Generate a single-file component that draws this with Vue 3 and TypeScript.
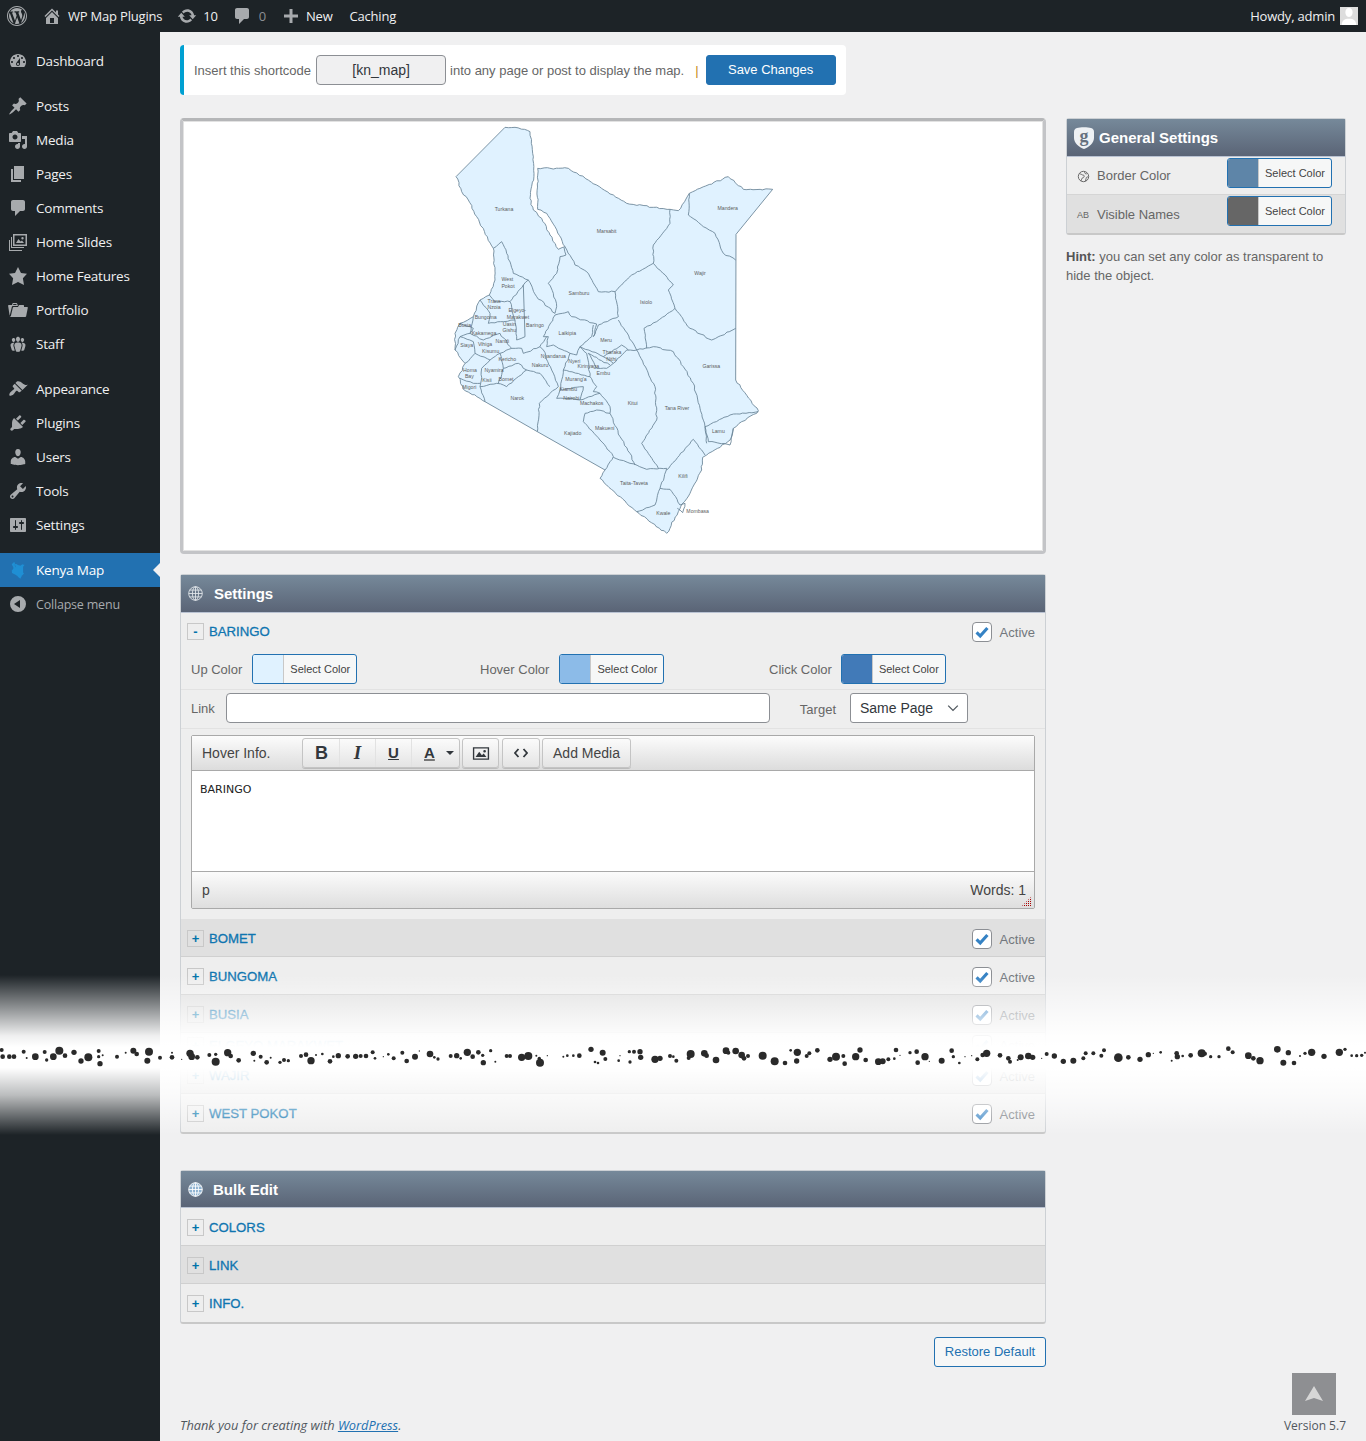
<script setup lang="ts">
import { computed } from "vue";

const wpLogo = "M20 10c0-5.52-4.48-10-10-10S0 4.48 0 10s4.48 10 10 10 10-4.48 10-10zM10 1.01c4.96 0 8.99 4.03 8.99 8.99s-4.03 8.99-8.99 8.99S1.01 14.96 1.01 10 5.04 1.01 10 1.01zM8.01 14.82L4.96 6.61c.49-.03 1.05-.08 1.05-.08.43-.05.38-1.01-.06-.99 0 0-1.29.1-2.13.1-.15 0-.33 0-.52-.01 1.44-2.17 3.9-3.6 6.7-3.6 2.09 0 3.99.79 5.41 2.09-.6-.08-1.45.35-1.45 1.42 0 .66.38 1.22.79 1.88.31.54.5 1.22.5 2.21 0 1.34-1.27 4.48-1.27 4.48l-2.71-7.5c.48-.03.75-.16.75-.16.43-.05.38-1.1-.05-1.08 0 0-1.3.11-2.14.11-.78 0-2.11-.11-2.11-.11-.43-.02-.48 1.06-.05 1.08l.84.08 1.12 3.04zm6.02 2.15L16.64 10s.67-1.69.39-3.81c.63 1.14.94 2.42.94 3.81 0 2.96-1.56 5.58-3.94 6.97zM2.68 6.77L6.5 17.25c-2.67-1.3-4.47-4.08-4.47-7.25 0-1.16.2-2.23.65-3.23zm7.45 4.53l2.29 6.25c-.75.27-1.57.42-2.42.42-.72 0-1.41-.11-2.06-.3z";
const homeIcon = "M16 8.5l1.53 1.53-1.06 1.06L10 4.62l-6.47 6.47-1.06-1.06L10 2.5l4 4v-2h2v4zm-6-2.46l6 5.99V18H4v-5.97zM12 17v-5H8v5h4z";
const updateIcon = "M10.2 3.28c3.53 0 6.43 2.61 6.92 6h2.08l-3.5 4-3.5-4h2.32c-.45-1.97-2.21-3.45-4.32-3.45-1.45 0-2.73.71-3.54 1.78L4.95 5.66C6.23 4.2 8.11 3.28 10.2 3.28zm-.4 13.44c-3.52 0-6.43-2.61-6.92-6H.8l3.5-4c1.17 1.33 2.33 2.67 3.5 4H5.48c.45 1.97 2.21 3.45 4.32 3.45 1.45 0 2.73-.71 3.54-1.78l1.71 1.95c-1.28 1.46-3.15 2.38-5.25 2.38z";
const commentIcon = "M5 2h10c1.1 0 2 .9 2 2v7c0 1.1-.9 2-2 2h-3l-5 5v-5H5c-1.1 0-2-.9-2-2V4c0-1.1.9-2 2-2z";
const plusIcon = "M17 8.5v3h-5.5V17h-3v-5.5H3v-3h5.5V3h3v5.5z";

const menu = [
    { label: "Dashboard", icon: "M3.76 16h12.48c1.1-1.37 1.76-3.11 1.76-5 0-4.42-3.58-8-8-8s-8 3.58-8 8c0 1.89.66 3.63 1.76 5zM10 4c.55 0 1 .45 1 1s-.45 1-1 1-1-.45-1-1 .45-1 1-1zM6 6c.55 0 1 .45 1 1s-.45 1-1 1-1-.45-1-1 .45-1 1-1zm8 0c.55 0 1 .45 1 1s-.45 1-1 1-1-.45-1-1 .45-1 1-1zm-5.37 5.55L12 7v6c0 1.1-.9 2-2 2s-2-.9-2-2c0-.57.24-1.08.63-1.45zM4 10c.55 0 1 .45 1 1s-.45 1-1 1-1-.45-1-1 .45-1 1-1zm12 0c.55 0 1 .45 1 1s-.45 1-1 1-1-.45-1-1 .45-1 1-1zm-5 3c0-.55-.45-1-1-1s-1 .45-1 1 .45 1 1 1 1-.45 1-1z", gap: false },
    { label: "Posts", icon: "M10.44 3.02l1.82-1.82 6.36 6.35-1.83 1.82c-1.05-.68-2.48-.57-3.41.36l-.75.75c-.92.93-1.04 2.35-.35 3.41l-1.83 1.82-2.41-2.41-2.8 2.79c-.42.42-3.38 2.71-3.8 2.29s1.86-3.39 2.28-3.81l2.79-2.79L4.1 9.36l1.83-1.82c1.05.69 2.48.57 3.4-.36l.75-.75c.93-.92 1.05-2.35.36-3.41z", gap: true },
    { label: "Media", icon: "M13 11V4c0-.55-.45-1-1-1h-1.67L9 1H5L3.67 3H2c-.55 0-1 .45-1 1v7c0 .55.45 1 1 1h10c.55 0 1-.45 1-1zM7 4.5c1.38 0 2.5 1.12 2.5 2.5S8.38 9.5 7 9.5 4.5 8.38 4.5 7 5.62 4.5 7 4.5zM14 6h5v10.5c0 1.38-1.12 2.5-2.5 2.5S14 17.88 14 16.5s1.12-2.5 2.5-2.5c.17 0 .34.02.5.05V9h-3V6zm-4 8.05V13h2v3.5c0 1.38-1.12 2.5-2.5 2.5S7 17.88 7 16.5 8.12 14 9.5 14c.17 0 .34.02.5.05z", gap: false },
    { label: "Pages", icon: "M6 15V2h10v13H6zm-1 1h8v2H3V5h2v11z", gap: false },
    { label: "Comments", icon: commentIcon, gap: false },
    { label: "Home Slides", icon: "M5 2h14v12H5V2zm1.5 1.5v9h11v-9h-11zM8 11l2.5-4 2 2.5 1.5-1 2 2.5H8zm6.5-6a1.2 1.2 0 1 1 0 2.4 1.2 1.2 0 0 1 0-2.4zM3 5h1v10h12v1H3V5zM1 8h1v10h12v1H1V8z", gap: false },
    { label: "Home Features", icon: "M10 1l3 6 6 .75-4.12 4.62L16 19l-6-3-6 3 1.13-6.63L1 7.75 7 7z", gap: false },
    { label: "Portfolio", icon: "M4 5H.78c-.37 0-.74.32-.69.84l1.56 9.99S3.5 8.47 3.86 6.7c.11-.53.61-.7.98-.7H10s-.7-2.08-.77-2.31C9.11 3.25 8.89 3 8.45 3H5.14c-.36 0-.7.23-.8.64C4.25 4.04 4 5 4 5zm4.88 0h-4s.42-1 .87-1h2.13c.48 0 1 1 1 1zM2.67 16.25c-.31.47-.76.75-1.26.75h15.73c.54 0 .92-.31 1.03-.83.44-2.19 1.68-8.44 1.68-8.44.07-.5-.3-.73-.62-.73H16V5.53c0-.16-.26-.53-.66-.53h-3.76c-.52 0-.87.58-.87.58L10 7H5.59c-.32 0-.63.19-.69.5 0 0-1.59 6.7-1.72 7.33-.07.37-.22.99-.51 1.42z", gap: false },
    { label: "Staff", icon: "M8.03 4.46c-.29 1.28.55 3.46 1.97 3.46 1.41 0 2.25-2.18 1.96-3.46-.22-.98-1.08-1.63-1.96-1.63-.89 0-1.74.65-1.97 1.63zm-4.13.9c-.25 1.08.47 2.93 1.67 2.93s1.92-1.85 1.67-2.93c-.19-.83-.92-1.39-1.67-1.39s-1.48.56-1.67 1.39zm8.86 0c-.25 1.08.47 2.93 1.66 2.93 1.2 0 1.92-1.85 1.67-2.93-.19-.83-.92-1.39-1.67-1.39-.74 0-1.47.56-1.66 1.39zm-.59 11.43l1.25-4.3C14.2 10 12.71 8.47 10 8.47c-2.72 0-4.21 1.53-3.44 4.02l1.26 4.3C8.05 17.51 9 18 10 18c.98 0 1.94-.49 2.17-1.21zm-6.1-7.63c-.49.67-.96 1.83-.42 3.59l1.12 3.79c-.34.2-.77.31-1.2.31-.85 0-1.65-.41-1.85-1.03l-1.07-3.65c-.65-2.11.61-3.4 2.92-3.4.27 0 .54.02.79.06-.1.1-.2.22-.29.33zm8.35-.39c2.31 0 3.58 1.29 2.92 3.4l-1.07 3.65c-.2.62-1 1.03-1.85 1.03-.43 0-.86-.11-1.2-.31l1.11-3.79c.55-1.76.08-2.92-.42-3.59-.09-.11-.19-.23-.29-.33.25-.04.51-.06.8-.06z", gap: false },
    { label: "Appearance", icon: "M14.48 11.06L7.41 3.99l1.5-1.5c.5-.56 2.3-.47 3.51.32 1.21.8 1.43 1.28 2.91 2.1 1.18.64 2.45 1.26 4.45.85zm-.71.71L6.7 4.7 4.93 6.47c-.39.39-.39 1.02 0 1.41l1.06 1.06c.39.39.39 1.03 0 1.42-.6.6-1.43 1.11-2.21 1.69-.35.26-.7.53-1.01.84C1.43 13.71.96 15.87 1.5 16.5c.53.53 2.79-.04 4.08-1.32.3-.3.58-.65.84-1 .58-.78 1.09-1.61 1.69-2.21.39-.39 1.02-.39 1.41 0l1.06 1.06c.39.39 1.02.39 1.41 0z", gap: true },
    { label: "Plugins", icon: "M13.11 4.36L9.87 7.6 8 5.73l3.24-3.24c.35-.34 1.05-.2 1.56.32.52.51.66 1.21.31 1.55zm-8 1.77l.91-1.12 9.01 9.01-1.19.84c-.71.71-2.63 1.16-3.82 1.16H6.14L4.9 17.26c-.59.59-1.54.59-2.12 0-.59-.58-.59-1.53 0-2.12l1.24-1.24v-3.88c0-1.13.4-3.19 1.09-3.89zm7.26 3.97l3.24-3.24c.34-.35 1.04-.21 1.55.31.52.51.66 1.21.31 1.55l-3.24 3.25z", gap: false },
    { label: "Users", icon: "M10 9.25c-2.27 0-2.73-3.44-2.73-3.44C7 4.02 7.82 2 9.97 2c2.16 0 2.98 2.02 2.71 3.81 0 0-.41 3.44-2.68 3.44zm0 2.57L12.72 10c2.39 0 4.52 2.33 4.52 4.53v2.49s-3.65 1.13-7.24 1.13c-3.65 0-7.24-1.13-7.24-1.13v-2.49c0-2.25 1.94-4.48 4.47-4.48z", gap: false },
    { label: "Tools", icon: "M16.68 9.77c-1.34 1.34-3.3 1.67-4.95.99l-5.41 6.52c-.99.99-2.59.99-3.58 0s-.99-2.59 0-3.57l6.52-5.42c-.68-1.65-.35-3.61.99-4.95 1.28-1.28 3.12-1.62 4.72-1.06l-2.89 2.89 2.82 2.82 2.86-2.87c.53 1.58.18 3.39-1.08 4.65zM3.81 16.21c.4.39 1.04.39 1.43 0 .4-.4.4-1.04 0-1.43-.39-.4-1.03-.4-1.43 0-.39.39-.39 1.03 0 1.43z", gap: false },
    { label: "Settings", icon: "M18 16V4c0-.55-.45-1-1-1H3c-.55 0-1 .45-1 1v12c0 .55.45 1 1 1h14c.55 0 1-.45 1-1zM8 11h1c.55 0 1 .45 1 1s-.45 1-1 1H8v1.5c0 .28-.22.5-.5.5s-.5-.22-.5-.5V13H6c-.55 0-1-.45-1-1s.45-1 1-1h1V5.5c0-.28.22-.5.5-.5s.5.22.5.5V11zm5-2h-1c-.55 0-1-.45-1-1s.45-1 1-1h1V5.5c0-.28.22-.5.5-.5s.5.22.5.5V7h1c.55 0 1 .45 1 1s-.45 1-1 1h-1v5.5c0 .28-.22.5-.5.5s-.5-.22-.5-.5V9z", gap: false },
];

const colorFields = [
    { label: "Up Color", swatch: "#e0f2ff", cls: "up" },
    { label: "Hover Color", swatch: "#8cbbe8", cls: "hover" },
    { label: "Click Color", swatch: "#417ab8", cls: "click" },
];

const collapsedRows = [
    { name: "BOMET", cls: "dark" },
    { name: "BUNGOMA", cls: "" },
    { name: "BUSIA", cls: "dark" },
    { name: "ELGEYO MARAKWET", cls: "cut" },
    { name: "WAJIR", cls: "dark" },
    { name: "WEST POKOT", cls: "" },
];

const bulkRows = [
    { name: "COLORS", cls: "" },
    { name: "LINK", cls: "dark" },
    { name: "INFO.", cls: "" },
];

// map is traced at 3x, same scale as the dots strip
const mapOutline = "M195 22L225 22L270 35L274 70L278 100L282 160L270 235L280 270L305 295L330 345L355 388L375 380L345 320L320 280L293 268L293 145L385 145L470 195L560 250L640 262L690 268L715 272L748 220L865 170L910 208L998 208L888 343L887 780L955 872L950 880L905 905L880 925L870 960L800 1005L788 1012L785 1050L750 1120L722 1160L680 1240L590 1175L500 1095L480 1075L495 1050L292 935L135 845L70 808L55 770L75 730L45 690L45 640L60 610L100 590L120 540L148 525L165 480L160 385L110 290L85 240L65 215L48 170Z";
const mapBorders = [
    "M160 385L185 365L200 400L220 460L265 480L290 530L345 580L350 560L340 520L325 490L350 460L360 410L378 405L372 382",
    "M375 380L405 435L440 455L475 515L525 515L575 465L640 430L640 375L690 310L690 268",
    "M748 220L745 285L790 320L825 340L850 400L887 420",
    "M640 430L700 495L685 510L705 565L750 625L815 660L887 625",
    "M525 515L535 590L475 615L460 650L470 612L395 590L385 575L345 585L310 650L325 650L320 680L340 675L390 700L410 705L420 680L455 650L460 615",
    "M705 565L650 605L612 625L620 685",
    "M535 600L590 690L645 800L650 900L605 970L655 1045",
    "M420 680L490 710L520 730L560 690L590 690L640 680L700 695L730 740L760 790L795 920L800 970",
    "M795 920L870 885L955 875",
    "M795 920L805 965L870 975L880 925",
    "M680 1050L760 958L795 1005",
    "M520 1012L570 1030L620 1048L680 1045L660 1105L645 1155L590 1175",
    "M660 1105L690 1108L720 1155L735 1150L728 1178L712 1165",
    "M495 1050L520 1010L480 960L430 905L435 880L470 870L510 880L540 950L570 1000L585 1035",
    "M292 935L298 850L330 820L355 800L335 750L310 690L300 680L320 650",
    "M120 800L135 845",
    "M120 800L170 790L200 800L235 770L260 750L300 760L330 800",
    "M350 835L360 810L430 800L420 840L385 835L350 835",
    "M420 840L480 820L510 860L510 880",
    "M360 810L370 750L390 700M370 750L450 770L470 800L460 815L480 820",
    "M420 680L440 700L450 770M445 700L470 745L500 745L520 730M445 700L510 735M490 710L545 675L565 690",
    "M148 525L165 545L210 545L250 495L265 480M250 495L255 650L230 660L225 600L210 545",
    "M120 540L150 580L145 610L190 605L225 600M100 590L90 640L130 660L180 640L215 685L245 685L250 700L300 680",
    "M60 610L100 625L90 640L60 650L45 690M60 650L100 665L105 700L75 730",
    "M105 700L150 720L180 700L215 685M180 700L190 745L175 790M190 745L235 730L260 750M150 720L125 745L122 790L120 800",
    "M60 775L100 790L122 790",
];
const mapLabels: [string, number, number][] = [
    ["Turkana", 192, 267], ["Marsabit", 500, 333], ["Mandera", 863, 264], ["Wajir", 780, 459],
    ["West", 202, 477], ["Pokot", 204, 498], ["Samburu", 417, 519], ["Isiolo", 618, 546],
    ["Trans", 162, 543], ["Nzoia", 162, 562], ["Elgeyo-", 232, 570], ["Marakwet", 234, 591],
    ["Bungoma", 137, 591], ["Busia", 74, 615], ["Uasin", 208, 612], ["Gishu", 208, 630],
    ["Baringo", 285, 615], ["Kakamega", 132, 641], ["Laikipia", 382, 639], ["Meru", 498, 660],
    ["Vihiga", 135, 673], ["Nandi", 187, 663], ["Siaya", 80, 675], ["Kisumu", 152, 695],
    ["Tharaka", 516, 698], ["Nithi", 514, 717], ["Nyandarua", 340, 708], ["Nyeri", 403, 723],
    ["Kericho", 202, 717], ["Nakuru", 300, 735], ["Kirinyaga", 445, 738], ["Embu", 490, 760],
    ["Homa", 90, 750], ["Bay", 88, 769], ["Nyamira", 162, 750], ["Garissa", 814, 738],
    ["Murang'a", 408, 777], ["Kisii", 141, 780], ["Bomet", 198, 777], ["Migori", 88, 801],
    ["Narok", 232, 834], ["Kiambu", 385, 809], ["Nairobi", 394, 834], ["Machakos", 455, 849],
    ["Kitui", 578, 851], ["Tana River", 711, 864], ["Lamu", 835, 933], ["Makueni", 494, 924],
    ["Kajiado", 398, 939], ["Kilifi", 729, 1068], ["Taita-Taveta", 582, 1089], ["Kwale", 670, 1179],
    ["Mombasa", 773, 1173],
];

// county lines are wobbly in the original, long straight borders stay straight
const wobble = (d: string) => {
    let seed = 7;
    const noise = () => {
        seed = (seed * 16807) % 2147483647;
        return (seed % 1000) / 500 - 1;
    };
    return d.split("M").filter(Boolean).map((part) => {
        const closed = part.endsWith("Z");
        const pts = part.replace("Z", "").split("L").map((p) => p.trim().split(" ").map(Number));
        if (closed) pts.push(pts[0]);
        let out = `M${pts[0][0]} ${pts[0][1]}`;
        for (let i = 1; i < pts.length; i++) {
            const [x0, y0] = pts[i - 1];
            const [x1, y1] = pts[i];
            const len = Math.hypot(x1 - x0, y1 - y0);
            if (len < 150) {
                const steps = Math.floor(len / 9);
                for (let s = 1; s < steps; s++) {
                    const t = s / steps;
                    out += `L${(x0 + (x1 - x0) * t + noise() * 2.2).toFixed(1)} ${(y0 + (y1 - y0) * t + noise() * 2.2).toFixed(1)}`;
                }
            }
            out += `L${x1} ${y1}`;
        }
        return out;
    }).join("");
};
const outlineWobbly = computed(() => wobble(mapOutline));
const bordersWobbly = computed(() => mapBorders.map(wobble));

// x, y, r at 3x, one list per stretch of the strip
const dotSegments: [number, number[][]][] = [
    [0, [[5,30,5],[8,50,6],[28,50,6],[42,50,6],[71,35,5],[80,54,2],[106,50,9],[134,36,5],[140,60,4],[160,50,9],[178,32,11],[195,47,6],[222,37,7],[243,63,7],[265,52,11],[296,33,5],[296,50,4],[308,46,2],[300,71,7],[351,50,5],[377,38,2],[400,32,8],[410,42,6],[447,35,11],[442,62,8],[480,53,5],[516,52,6],[516,38,2],[545,58,1],[570,40,10],[575,50,9],[592,52,6],[628,45,5],[647,43,4],[647,65,11],[683,38,10],[692,48,6],[716,61,6],[760,40,7],[782,50,5],[763,62,2],[800,67,6],[812,53,2],[840,67,4],[852,60,5],[865,62,4],[903,48,5],[918,44,6],[933,62,10],[948,45,2],[967,42,3],[990,64,6],[1000,50,3],[1015,47,7],[1043,49,6],[1067,49,7],[1082,48,5],[1098,48,6],[1118,37,5],[1125,55,3],[1150,50,1],[1165,43,3],[1181,55,5],[1207,38,5],[1220,63,6],[1245,50,8],[1258,33,1],[1290,42,9],[1303,52,3],[1314,57,4],[1352,48,5],[1370,47,7]]],
    [1380, [[2,55,3],[22,37,10],[38,50,6],[55,37,6],[68,46,4],[70,68,7],[92,32,4],[106,65,2],[140,48,5],[150,48,5],[185,52,10],[205,48,11],[229,47,2],[238,55,4],[240,68,11],[262,47,1],[310,50,2],[322,47,3],[340,47,3],[358,47,6],[393,28,7],[428,38,8],[436,57,5],[405,66,3],[414,69,3],[476,62,3],[480,47,1],[508,35,4],[522,35,5],[540,35,7],[542,52,7],[510,66,4],[585,58,10],[600,55,7],[630,48,5],[640,50,3],[649,62,5],[692,42,11],[686,54,5],[733,40,9],[740,47,6],[768,60,9],[798,32,9],[805,38,5],[827,33,9],[845,45,9],[852,55,6],[864,48,5],[908,47,11],[944,64,11],[975,69,6],[992,31,3],[1012,37,10],[1010,63,7],[1040,48,5],[1048,40,5],[1072,31,6],[1110,58,7],[1128,50,11],[1150,48,5],[1154,71,6],[1187,50,10],[1200,30,7],[1217,60,6],[1255,65,9],[1268,64,8],[1285,58,5],[1303,56,3],[1308,30,6],[1320,46,1],[1350,38,4],[1370,35,6],[1373,68,6]]],
    [2760, [[15,50,10],[28,64,1],[65,62,8],[95,32,6],[100,50,4],[118,69,3],[135,50,1],[155,47,1],[172,58,5],[188,45,6],[200,40,10],[240,46,6],[265,55,6],[270,65,5],[293,60,2],[302,52,8],[325,48,9],[338,52,7],[365,55,1],[380,42,5],[403,48,7],[430,64,7],[460,62,8],[490,55,5],[497,40,5],[520,40,5],[552,31,5],[544,47,5],[595,53,12],[625,52,6],[660,58,7],[685,44,7],[700,40,1],[722,37,3],[755,62,2],[770,40,6],[772,50,7],[788,48,3],[812,46,6],[845,40,11],[855,41,5],[872,50,4],[897,50,4],[925,26,6],[938,37,5],[985,47,9],[1000,55,6],[1020,62,10],[1072,28,9],[1105,38,7],[1090,68,8],[1122,69,6],[1140,48,2],[1155,40,4],[1175,37,10],[1212,49,7],[1258,37,10],[1275,28,4],[1295,47,3],[1310,47,4],[1325,46,4],[1335,38,2]]],
];
const dots = computed(() =>
    dotSegments.flatMap(([offset, list]) => list.map(([x, y, r]) => ({ x: x + offset, y, r: r + 1 })))
);
</script>

<template>
    <div class="page">
        <header class="adminbar">
            <svg class="wp" viewBox="0 0 20 20"><path :d="wpLogo" /></svg>
            <span class="ab-item site"><svg viewBox="0 0 20 20"><path :d="homeIcon" /></svg>WP Map Plugins</span>
            <span class="ab-item updates"><svg viewBox="0 0 20 20"><path :d="updateIcon" /></svg>10</span>
            <span class="ab-item comments"><svg viewBox="0 0 20 20"><path :d="commentIcon" /></svg><i>0</i></span>
            <span class="ab-item new"><svg viewBox="0 0 20 20"><path :d="plusIcon" /></svg>New</span>
            <span class="ab-item caching">Caching</span>
            <span class="howdy">Howdy, admin
                <span class="avatar"><svg viewBox="0 0 20 20"><path d="M10 11c-3 0-4-3-4-5.5S7.5 1 10 1s4 2 4 4.5S13 11 10 11zm-8 9c0-5 3-7 8-7s8 2 8 7H2z" /></svg></span>
            </span>
        </header>

        <div class="body">
            <nav class="sidebar">
                <a v-for="item in menu" :key="item.label" class="menu-item" :class="{ gap: item.gap }">
                    <svg viewBox="0 0 20 20"><path :d="item.icon" /></svg>{{ item.label }}
                </a>
                <a class="menu-item gap current">
                    <svg class="kenya" viewBox="0 0 1020 1260"><path :d="mapOutline" /></svg>Kenya Map
                </a>
                <a class="menu-item collapse">
                    <svg viewBox="0 0 20 20"><path fill-rule="evenodd" d="M10 2a8 8 0 1 1 0 16 8 8 0 0 1 0-16zm2 4l-6 4 6 4V6z" /></svg>Collapse menu
                </a>
            </nav>

            <main class="content">
                <div class="notice">
                    <span>Insert this shortcode</span>
                    <input class="shortcode" value="[kn_map]" readonly />
                    <span>into any page or post to display the map.</span>
                    <span class="pipe">|</span>
                    <button class="save">Save Changes</button>
                </div>

                <div class="columns">
                    <div class="left">
                        <div class="map-box">
                            <svg class="map" viewBox="0 6 1038 1260">
                                <path class="land" :d="outlineWobbly" />
                                <path v-for="(b, i) in bordersWobbly" :key="i" class="line" :d="b" />
                                <text v-for="l in mapLabels" :key="l[0]" :x="l[1]" :y="l[2] + 5" text-anchor="middle">{{ l[0] }}</text>
                            </svg>
                        </div>

                        <section class="panel settings">
                            <h2 class="panel-head">
                                <svg class="globe" viewBox="0 0 20 20"><circle cx="10" cy="10" r="8" /><ellipse cx="10" cy="10" rx="3.6" ry="8" /><path d="M2 10h16M3 6h14M3 14h14M10 2v16" /></svg>
                                Settings
                            </h2>
                            <div class="open-row">
                                <div class="row-title">
                                    <span class="toggle">-</span><span class="name">BARINGO</span>
                                    <label class="active"><span class="check"><svg viewBox="0 0 20 20"><path d="M4 10.5l4 4 8-9" /></svg></span>Active</label>
                                </div>
                                <div class="colors">
                                    <div v-for="f in colorFields" :key="f.label" class="color-field" :class="f.cls">
                                        <span>{{ f.label }}</span>
                                        <span class="picker"><i :style="{ background: f.swatch }"></i><b>Select Color</b></span>
                                    </div>
                                </div>
                                <div class="link-row">
                                    <span>Link</span>
                                    <input class="link" />
                                    <span class="target-label">Target</span>
                                    <span class="select">Same Page<svg viewBox="0 0 20 20"><path d="M4 7l6 6 6-6" /></svg></span>
                                </div>
                                <div class="editor">
                                    <div class="toolbar">
                                        <span class="hover-label">Hover Info.</span>
                                        <div class="tb-group">
                                            <span class="tb b">B</span>
                                            <span class="tb em">I</span>
                                            <span class="tb u">U</span>
                                            <span class="tb color"><u>A</u><svg viewBox="0 0 8 4"><path d="M0 0h8L4 4z" /></svg></span>
                                        </div>
                                        <span class="tb-btn img"><svg viewBox="0 0 20 16"><path fill-rule="evenodd" d="M1 1h18v14H1V1zm1.5 1.5v11h15v-11h-15zM4 12l4-6 3 4 2-2 3 4H4zm10-8a1.5 1.5 0 1 1 0 3 1.5 1.5 0 0 1 0-3z" /></svg></span>
                                        <span class="tb-btn code"><svg viewBox="0 0 14 10"><path d="M4.5 1L1 5l3.5 4M9.5 1L13 5 9.5 9" /></svg></span>
                                        <span class="tb-btn media">Add Media</span>
                                    </div>
                                    <div class="edit-area">BARINGO</div>
                                    <div class="status">
                                        <span>p</span><span class="words">Words: 1</span>
                                        <span class="grip"></span>
                                    </div>
                                </div>
                            </div>
                            <div v-for="r in collapsedRows" :key="r.name" class="row" :class="r.cls">
                                <span class="toggle">+</span><span class="name">{{ r.name }}</span>
                                <label class="active"><span class="check"><svg viewBox="0 0 20 20"><path d="M4 10.5l4 4 8-9" /></svg></span>Active</label>
                            </div>
                        </section>

                        <section class="panel bulk">
                            <h2 class="panel-head">
                                <svg class="globe solid" viewBox="0 0 20 20"><circle cx="10" cy="10" r="8" /><ellipse cx="10" cy="10" rx="3.6" ry="8" /><path d="M2 10h16M3 6h14M3 14h14M10 2v16" /></svg>
                                Bulk Edit
                            </h2>
                            <div v-for="r in bulkRows" :key="r.name" class="row" :class="r.cls">
                                <span class="toggle">+</span><span class="name">{{ r.name }}</span>
                            </div>
                        </section>

                        <div class="restore-line"><button class="restore">Restore Default</button></div>
                    </div>

                    <aside class="right">
                        <section class="panel general">
                            <h2 class="panel-head">
                                <span class="shield"><svg viewBox="0 0 20 22"><path d="M3 1C6 0 14 0 17 1c2 .6 3 2 3 4v6c0 5-5 9-10 11C5 20 0 16 0 11V5C0 3 1 1.6 3 1z" /></svg><b>g</b></span>
                                General Settings
                            </h2>
                            <div class="g-row">
                                <svg class="g-icon" viewBox="0 0 20 20"><circle cx="10" cy="10" r="8" /><path d="M4 6c3 0 4 2 6 2s1 4-1 4-2 4-3 5M12 3c-1 2 1 3 3 3M18 11c-2-1-4 0-4 2s-1 3-1 4" /></svg>
                                <span>Border Color</span>
                                <span class="picker"><i class="border-swatch"></i><b>Select Color</b></span>
                            </div>
                            <div class="g-row dark">
                                <small>AB</small>
                                <span>Visible Names</span>
                                <span class="picker"><i class="names-swatch"></i><b>Select Color</b></span>
                            </div>
                        </section>
                        <p class="hint"><b>Hint:</b> you can set any color as transparent to hide the object.</p>
                    </aside>
                </div>

                <footer class="foot">
                    <em>Thank you for creating with <a>WordPress</a>.</em>
                    <span class="version">Version 5.7</span>
                </footer>
            </main>
        </div>

        <a class="to-top"><svg viewBox="0 0 18 16"><path d="M9 0l9 15-9-3-9 3z" /></svg></a>

        <div class="tear">
            <svg viewBox="0 0 4098 90">
                <circle v-for="(d, i) in dots" :key="i" :cx="d.x" :cy="d.y" :r="d.r" />
            </svg>
        </div>
    </div>
</template>

<style>
html,
body {
    margin: 0;
    background: #f0f0f1;
}
</style>

<style scoped>
.page {
    position: relative;
    width: 1366px;
    height: 1441px;
    overflow: hidden;
    background: #f0f0f1;
    font-family: "Liberation Sans", Arial, sans-serif;
    font-size: 13px;
    color: #666;
}

/* admin bar */
.adminbar {
    display: flex;
    align-items: center;
    height: 32px;
    background: #1d2327;
    color: #f0f0f1;
    font-family: "Open Sans", sans-serif;
    font-size: 13px;
    letter-spacing: -0.2px;
}

.adminbar svg {
    width: 20px;
    height: 20px;
    fill: #a7aaad;
}

.adminbar .wp {
    margin: 0 15px 0 7px;
    width: 20px;
}

.ab-item {
    display: flex;
    align-items: center;
    gap: 6px;
}

.site {
    margin-right: 15px;
}

.updates {
    margin-right: 14px;
}

.comments {
    margin-right: 15px;
}

.comments i {
    color: #8c8f94;
    font-style: normal;
    margin-left: 1px;
}

.new {
    gap: 5px;
    margin-right: 17px;
}

.howdy {
    display: flex;
    align-items: center;
    gap: 5px;
    margin-left: auto;
    margin-right: 8px;
}

.avatar {
    display: block;
    width: 18px;
    height: 18px;
    background: #ddd;
    overflow: hidden;
}

.adminbar .avatar svg {
    display: block;
    width: 18px;
    height: 18px;
    fill: #fff;
}

/* sidebar */
.body {
    display: flex;
    height: 1409px;
}

.sidebar {
    flex: none;
    width: 160px;
    padding-top: 12px;
    box-sizing: border-box;
    background: #1d2327;
    font-family: "Open Sans", sans-serif;
    font-size: 13.5px;
    letter-spacing: -0.2px;
    color: #f0f0f1;
}

.menu-item {
    position: relative;
    display: flex;
    align-items: center;
    height: 34px;
    padding-left: 8px;
    box-sizing: border-box;
}

.menu-item svg {
    width: 20px;
    height: 20px;
    margin-right: 8px;
    fill: #a7aaad;
}

.menu-item.gap {
    margin-top: 11px;
}

.current {
    background: #2271b1;
    color: #fff;
}

.menu-item svg.kenya {
    width: 14px;
    height: 17px;
    margin: 0 11px 0 3px;
    fill: #1f8fd4;
}

.current::after {
    content: "";
    position: absolute;
    right: 0;
    top: 10px;
    border: 7px solid transparent;
    border-right-color: #f0f0f1;
    border-left: 0;
}

.collapse {
    color: #a7aaad;
    font-size: 12.5px;
}

/* content */
.content {
    flex: 1;
    padding: 13px 20px 0;
    min-width: 0;
}

.notice {
    display: flex;
    align-items: center;
    box-sizing: border-box;
    width: 666px;
    height: 50px;
    padding-left: 10px;
    background: #fff;
    border-left: 4px solid #00a0d2;
    border-radius: 4px;
}

.shortcode {
    box-sizing: border-box;
    width: 130px;
    height: 30px;
    margin: 0 4px 0 5px;
    background: #f0f0f1;
    border: 1px solid #8c8f94;
    border-radius: 4px;
    color: #32373c;
    font: 14px "Liberation Sans", sans-serif;
    text-align: center;
    outline: none;
}

.pipe {
    margin: 0 7px 0 11px;
    color: #c58b20;
}

.save {
    width: 130px;
    height: 30px;
    padding: 0 0 2px;
    background: #2271b1;
    border: 1px solid #2271b1;
    border-radius: 3px;
    color: #fff;
    font: 13px "Liberation Sans", sans-serif;
}

.columns {
    display: grid;
    grid-template-columns: 866px 280px;
    gap: 20px;
    margin-top: 23px;
}

.map-box {
    display: flex;
    justify-content: center;
    box-sizing: border-box;
    height: 436px;
    padding: 1px;
    background: #fff;
    border: 3px solid #c3c4c7;
    border-top-color: #b5b6b8;
    border-radius: 4px;
    box-shadow: inset 0 0 0 1px #e2e2e2;
}

.map {
    width: 346px;
    height: 420px;
}

.land {
    fill: #e0f2ff;
    stroke: #6a8497;
    stroke-width: 2.6;
}

.line {
    fill: none;
    stroke: #6a8497;
    stroke-width: 2.6;
}

.map text {
    fill: #5d5d5d;
    font-size: 15.5px;
    font-family: "Liberation Sans", sans-serif;
}

.panel {
    border: 1px solid #ccd0d4;
    border-bottom: 2px solid #c8c8c8;
    border-radius: 3px;
    background: #eee;
}

.panel-head {
    display: flex;
    align-items: center;
    box-sizing: border-box;
    height: 38px;
    margin: 0;
    padding-left: 6px;
    background: linear-gradient(#76899a, #5a6476);
    border-bottom: 1px solid #b9c2d2;
    color: #fff;
    font: bold 15px "Liberation Sans", sans-serif;
}

.settings {
    margin-top: 20px;
}

.bulk {
    margin-top: 36px;
}

.bulk .panel-head {
    height: 37px;
}

.globe {
    width: 17px;
    height: 17px;
    margin-right: 10px;
    fill: none;
    stroke: #e4e8ec;
    stroke-width: 1;
}

.globe.solid {
    margin-right: 9px;
    fill: #8fb3d1;
    stroke: #fff;
}

.row-title,
.row {
    display: flex;
    align-items: center;
    box-sizing: border-box;
    height: 38px;
    padding: 2px 10px 0 6px;
    border-bottom: 1px solid #d0d0d0;
}

.row-title {
    padding: 0 10px 1px 6px;
    border-bottom: 0;
}

.row.dark {
    background: #e0e0e0;
}

.row.cut {
    height: 23px;
    background: #eee;
}

.row:last-child {
    padding-top: 1px;
    border-bottom: 0;
}

.toggle {
    box-sizing: border-box;
    width: 17px;
    height: 17px;
    margin-right: 5px;
    border: 1px solid #c8c8c8;
    color: #0073aa;
    font: bold 13px/15px "Liberation Sans", sans-serif;
    text-align: center;
}

.name {
    color: #0f75b0;
    font-size: 13.2px;
    -webkit-text-stroke: 0.3px #0f75b0;
}

.active {
    display: flex;
    align-items: flex-start;
    gap: 8px;
    height: 20px;
    margin-left: auto;
    color: #72777c;
    line-height: 22px;
}

.check {
    box-sizing: border-box;
    display: block;
    width: 20px;
    height: 20px;
    background: #fff;
    border: 1px solid #8c8f94;
    border-radius: 4px;
}

.check svg {
    display: block;
    width: 18px;
    height: 18px;
    fill: none;
    stroke: #3582c4;
    stroke-width: 3.5;
}

.colors {
    display: flex;
    align-items: flex-start;
    box-sizing: border-box;
    height: 39px;
    padding: 3px 10px 0;
    border-bottom: 1px solid #e2e2e2;
}

.color-field {
    display: flex;
    align-items: center;
    gap: 10px;
}

.color-field.up,
.color-field.hover {
    width: 289px;
}

.color-field.click {
    gap: 9px;
}

.picker {
    display: flex;
    box-sizing: border-box;
    width: 105px;
    height: 30px;
    border: 1px solid #2271b1;
    border-radius: 3px;
    overflow: hidden;
    background: #f6f7f7;
}

.picker i {
    display: block;
    width: 30px;
    border-right: 1px solid #c8c8c8;
}

.picker b {
    flex: 1;
    color: #444;
    font-weight: 400;
    font-size: 11px;
    line-height: 28px;
    text-align: center;
}

.link-row {
    display: flex;
    align-items: flex-start;
    box-sizing: border-box;
    height: 39px;
    padding: 3px 10px 0;
    border-bottom: 1px solid #e2e2e2;
    line-height: 32px;
}

.link {
    box-sizing: border-box;
    width: 544px;
    height: 30px;
    margin-left: 11px;
    background: #fff;
    border: 1px solid #8c8f94;
    border-radius: 4px;
    outline: none;
}

.target-label {
    margin: 1px 14px 0 30px;
}

.select {
    display: flex;
    align-items: center;
    justify-content: space-between;
    box-sizing: border-box;
    width: 118px;
    height: 30px;
    padding: 0 6px 0 9px;
    background: #fff;
    border: 1px solid #8c8f94;
    border-radius: 3px;
    color: #32373c;
    font-size: 14px;
    line-height: 28px;
}

.select svg {
    width: 16px;
    height: 16px;
    fill: none;
    stroke: #50575e;
    stroke-width: 1.6;
}

.editor {
    margin: 6px 10px 10px;
    border: 1px solid #a9a9a9;
    border-radius: 2px;
    font-size: 14px;
}

.toolbar {
    display: flex;
    align-items: center;
    height: 34px;
    background: linear-gradient(#fcfcfc, #dcdcdc);
    border-bottom: 1px solid #a9a9a9;
    color: #444;
}

.hover-label {
    width: 110px;
    padding-left: 10px;
    box-sizing: border-box;
}

.tb-group,
.tb-btn {
    display: flex;
    align-items: center;
    box-sizing: border-box;
    height: 30px;
    background: linear-gradient(#fbfbfb, #e4e4e4);
    border: 1px solid #c4c4c4;
    border-radius: 3px;
    box-shadow: 0 1px 0 #bbb;
}

.tb-group {
    width: 158px;
    padding-left: 1px;
}

.tb {
    display: block;
    width: 36px;
    color: #32373c;
    line-height: 28px;
    text-align: center;
    border-right: 1px solid #e2e2e2;
    box-sizing: border-box;
    font-size: 18px;
}

.tb.b {
    font-weight: 700;
}

.tb.em {
    font-style: italic;
    font-weight: 700;
    font-family: "Liberation Serif", serif;
    font-size: 19px;
}

.tb.u {
    text-decoration: underline;
    font-size: 15px;
    font-weight: 700;
}

.tb.color {
    display: flex;
    align-items: center;
    gap: 11px;
    width: 46px;
    padding-left: 12px;
    border: 0;
    font-size: 15px;
    font-weight: 700;
}

.tb.color u {
    text-decoration-color: #777;
    text-decoration-thickness: 2px;
}

.tb.color svg {
    flex: none;
    width: 8px;
    height: 4px;
    fill: #32373c;
}

.tb-btn {
    justify-content: center;
    margin-left: 2px;
}

.img {
    width: 37px;
}

.img svg {
    width: 18px;
    height: 15px;
    fill: #32373c;
}

.code {
    width: 38px;
    margin-left: 3px;
}

.code svg {
    width: 14px;
    height: 10px;
    fill: none;
    stroke: #32373c;
    stroke-width: 1.8;
}

.media {
    width: 89px;
    color: #444;
}

.edit-area {
    box-sizing: border-box;
    height: 100px;
    padding: 12px 8px;
    background: #fff;
    color: #222;
    font: 11px "DejaVu Sans", sans-serif;
}

.status {
    position: relative;
    display: flex;
    justify-content: space-between;
    align-items: center;
    height: 36px;
    padding: 0 8px 0 10px;
    background: linear-gradient(#fbfbfb, #dedede);
    border-top: 1px solid #a9a9a9;
    color: #444;
}

.grip {
    position: absolute;
    right: 2px;
    bottom: 2px;
    width: 10px;
    height: 10px;
    clip-path: polygon(100% 0, 100% 100%, 0 100%);
    background:
        repeating-linear-gradient(#dedede 0 1px, transparent 1px 2px),
        repeating-linear-gradient(90deg, #a00 0 1px, transparent 1px 2px);
}

.restore-line {
    display: flex;
    justify-content: flex-end;
    margin-top: 13px;
}

.restore {
    width: 112px;
    height: 30px;
    padding: 0 0 1px;
    background: #f6f7f7;
    border: 1px solid #2271b1;
    border-radius: 3px;
    color: #2271b1;
    font: 13px "Liberation Sans", sans-serif;
}

/* right column */
.general .panel-head {
    padding-left: 7px;
}

.shield {
    position: relative;
    display: block;
    width: 20px;
    height: 22px;
    margin-right: 5px;
}

.shield svg {
    display: block;
    width: 20px;
    height: 22px;
    fill: #eef1f4;
}

.shield b {
    position: absolute;
    left: 0;
    right: 0;
    top: 0;
    color: #66717f;
    font-family: "Liberation Serif", serif;
    font-size: 18px;
    line-height: 19px;
    text-align: center;
}

.g-row {
    display: flex;
    align-items: center;
    box-sizing: border-box;
    height: 38px;
    padding: 0 13px 0 10px;
    border-bottom: 1px solid #d5d5d5;
}

.g-row.dark {
    background: #e0e0e0;
    border-bottom: 0;
}

.g-row .picker {
    align-self: flex-start;
    margin: 1px 0 0 auto;
}

.g-icon {
    width: 13px;
    height: 13px;
    margin: 2px 7px 0 0;
    fill: none;
    stroke: #666;
    stroke-width: 1.5;
}

.g-row small {
    width: 13px;
    margin: 2px 7px 0 0;
    font-size: 9px;
}

.border-swatch {
    background: #5e85a8;
}

.names-swatch {
    background: #666;
}

.hint {
    margin: 12px 0 0;
    color: #666;
    line-height: 19px;
}

.hint b {
    color: #555;
}

/* footer */
.foot {
    display: flex;
    justify-content: space-between;
    margin-top: 50px;
    font-family: "Open Sans", sans-serif;
    font-size: 12.8px;
    color: #50575e;
}

.foot em {
    margin-top: -1px;
}

.foot a {
    color: #2271b1;
    text-decoration: underline;
}

.version {
    font-size: 12px;
}

.to-top {
    position: absolute;
    left: 1292px;
    top: 1373px;
    display: flex;
    align-items: center;
    justify-content: center;
    width: 44px;
    height: 42px;
    background: #8e8f92;
}

.to-top svg {
    width: 18px;
    height: 16px;
    fill: #d6d6d6;
}

/* torn strip over the page */
.tear {
    position: absolute;
    left: 0;
    top: 975px;
    width: 100%;
    height: 160px;
    background: linear-gradient(rgba(255, 255, 255, 0), rgba(255, 255, 255, 0.93) 38%, #fff 45%, #fff 58%, rgba(255, 255, 255, 0.7) 75%, rgba(255, 255, 255, 0));
    pointer-events: none;
}

.tear svg {
    position: absolute;
    left: 0;
    top: 65px;
    display: block;
    width: 1366px;
    height: 30px;
    fill: #2a2a2a;
}
</style>
